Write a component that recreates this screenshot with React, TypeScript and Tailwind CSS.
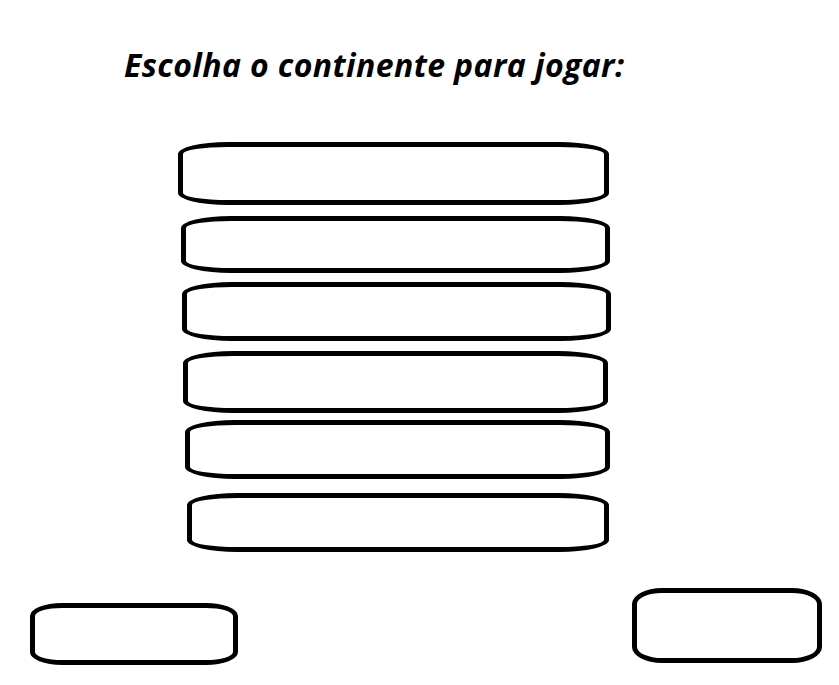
import React from "react";

const boxes = [
  { cls: "ml-[178px] w-[431px] h-[63px] mt-[57px]" },
  { cls: "ml-[181px] w-[429px] h-[57px] mt-[11px]" },
  { cls: "ml-[182px] w-[429px] h-[59px] mt-[9px]" },
  { cls: "ml-[183px] w-[425px] h-[62px] mt-[10px]" },
  { cls: "ml-[185px] w-[425px] h-[59px] mt-[7px]" },
  { cls: "ml-[187px] w-[422px] h-[59px] mt-[14px]" },
];

export default function App() {
  return (
    <div className="w-[839px] h-[685px] bg-white overflow-hidden flex flex-col">
      <h1
        className="mt-[45px] ml-[124px] text-[32px] leading-[40px] font-bold italic tracking-[0.4px] text-black whitespace-nowrap"
        style={{ fontFamily: '"Open Sans", sans-serif' }}
      >
        Escolha o continente para jogar:
      </h1>
      {boxes.map((b, i) => (
        <button
          key={i}
          className={`${b.cls} shrink-0 border-[5px] border-black rounded-[50px/12px] bg-white`}
        />
      ))}
      <div className="flex flex-row mt-[36px]">
        <button className="ml-[30px] mt-[15px] w-[208px] h-[62px] border-[5px] border-black rounded-[32px/13px] bg-white" />
        <button className="ml-[394px] w-[190px] h-[75px] border-[5px] border-black rounded-[30px/16px] bg-white" />
      </div>
    </div>
  );
}
